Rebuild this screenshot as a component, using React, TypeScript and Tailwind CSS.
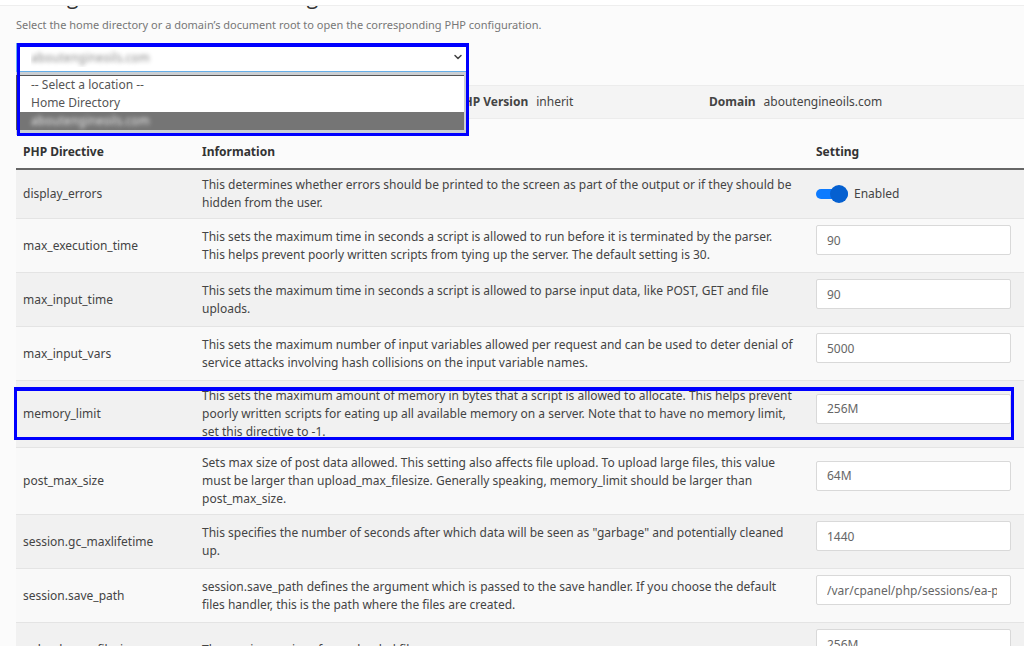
import { ChevronDown } from 'lucide-react';

type Directive = {
  name: string;
  info: string;
  value?: string;
  highlighted?: boolean;
};

const SELECTED_DOMAIN = 'aboutengineoils.com';

const DIRECTIVES: Directive[] = [
  {
    name: 'display_errors',
    info: 'This determines whether errors should be printed to the screen as part of the output or if they should be hidden from the user.',
  },
  {
    name: 'max_execution_time',
    info: 'This sets the maximum time in seconds a script is allowed to run before it is terminated by the parser. This helps prevent poorly written scripts from tying up the server. The default setting is 30.',
    value: '90',
  },
  {
    name: 'max_input_time',
    info: 'This sets the maximum time in seconds a script is allowed to parse input data, like POST, GET and file uploads.',
    value: '90',
  },
  {
    name: 'max_input_vars',
    info: 'This sets the maximum number of input variables allowed per request and can be used to deter denial of service attacks involving hash collisions on the input variable names.',
    value: '5000',
  },
  {
    name: 'memory_limit',
    info: 'This sets the maximum amount of memory in bytes that a script is allowed to allocate. This helps prevent poorly written scripts for eating up all available memory on a server. Note that to have no memory limit, set this directive to -1.',
    value: '256M',
    highlighted: true,
  },
  {
    name: 'post_max_size',
    info: 'Sets max size of post data allowed. This setting also affects file upload. To upload large files, this value must be larger than upload_max_filesize. Generally speaking, memory_limit should be larger than post_max_size.',
    value: '64M',
  },
  {
    name: 'session.gc_maxlifetime',
    info: 'This specifies the number of seconds after which data will be seen as "garbage" and potentially cleaned up.',
    value: '1440',
  },
  {
    name: 'session.save_path',
    info: 'session.save_path defines the argument which is passed to the save handler. If you choose the default files handler, this is the path where the files are created.',
    value: '/var/cpanel/php/sessions/ea-php74',
  },
  {
    name: 'upload_max_filesize',
    info: 'The maximum size of an uploaded file.',
    value: '256M',
  },
];

function LocationPicker() {
  return (
    <div className="relative z-10 w-[453px] max-w-full">
      <select
        aria-label="Location"
        defaultValue={SELECTED_DOMAIN}
        className="block h-[29px] w-full appearance-none border border-[#66afe9] bg-white px-[14px] text-[12px] text-transparent [text-shadow:0_0_4px_#888]"
      >
        <option value="">-- Select a location --</option>
        <option value="home">Home Directory</option>
        <option value={SELECTED_DOMAIN}>{SELECTED_DOMAIN}</option>
      </select>
      <ChevronDown
        aria-hidden="true"
        strokeWidth={3}
        className="pointer-events-none absolute top-[8px] right-[5px] size-3 text-[#444]"
      />
      <div className="absolute inset-x-0 top-full bg-[#cbcfd3] pt-[3px] pr-[5px] pb-[5px]">
        <ul
          role="listbox"
          aria-label="Location options"
          className="border-t border-l-2 border-[#555] bg-white text-[12px] leading-[18px] text-[#555]"
        >
          <li role="option" aria-selected="false" className="px-[13px]">
            -- Select a location --
          </li>
          <li role="option" aria-selected="false" className="px-[13px]">
            Home Directory
          </li>
          <li
            role="option"
            aria-selected="true"
            className="bg-[#757575] px-[13px] text-transparent [text-shadow:0_0_4px_#eee]"
          >
            {SELECTED_DOMAIN}
          </li>
        </ul>
      </div>
      <div className="pointer-events-none absolute top-0 right-0 -bottom-[64px] left-px border-[3px] border-t-4 border-[#0000ff]" />
    </div>
  );
}

function SummaryBar() {
  return (
    <dl className="mt-[13px] flex h-[34px] items-center border-y border-[#ececec] bg-[#f4f4f4]">
      <div className="flex w-[693px] gap-2 pl-[440px] whitespace-nowrap">
        <dt className="font-bold">PHP Version</dt>
        <dd>inherit</dd>
      </div>
      <div className="flex gap-2">
        <dt className="font-bold">Domain</dt>
        <dd>{SELECTED_DOMAIN}</dd>
      </div>
    </dl>
  );
}

function DirectiveSetting({ directive }: { directive: Directive }) {
  if (directive.value === undefined) {
    return (
      <div className="flex items-center gap-[6px]">
        <input
          id={directive.name}
          type="checkbox"
          role="switch"
          defaultChecked
          className="relative h-[10px] w-8 appearance-none rounded-full bg-[#0d7bff] before:absolute before:-top-1 before:right-0 before:size-[18px] before:rounded-full before:bg-[#0560d0]"
        />
        <label htmlFor={directive.name}>Enabled</label>
      </div>
    );
  }

  return (
    <input
      id={directive.name}
      type="text"
      defaultValue={directive.value}
      className="mb-[11px] block h-[30px] w-full rounded-xs border border-[#d9d9d9] bg-white pr-[13px] pl-[10px] text-[12px] text-[#666]"
    />
  );
}

function DirectiveRow({ directive }: { directive: Directive }) {
  return (
    <tr className="border-t border-[#e4e4e4] odd:bg-[#f1f1f1] even:bg-[#f9f9f9]">
      <td className="relative px-[7px] py-[6px]">
        {directive.value === undefined ? (
          directive.name
        ) : (
          <label htmlFor={directive.name}>{directive.name}</label>
        )}
        {directive.highlighted && (
          <div className="pointer-events-none absolute top-[6px] bottom-[7px] -left-[2px] z-10 w-[calc(100vw-24px)] border-[3px] border-t-4 border-[#0000ff]" />
        )}
      </td>
      <td className="py-[6px] pr-[13px] pl-[7px]">{directive.info}</td>
      <td className="py-[6px] pr-[13px] pl-[7px]">
        <DirectiveSetting directive={directive} />
      </td>
    </tr>
  );
}

function App() {
  return (
    <div className="flex h-screen flex-col overflow-hidden bg-[#fbfbfb] font-['Noto_Sans',sans-serif] text-[12px] leading-[18px] text-[#444]">
      <header className="h-[6px] shrink-0 border-b border-[#eee] bg-white" />
      <main className="min-h-0 flex-1 overflow-hidden pl-4">
        <h1 className="-mt-[23px] font-['Open_Sans',sans-serif] text-[21px] leading-[26px] text-[#333]">
          Configure PHP INI basic settings
        </h1>
        <p className="mt-[7px] mb-[9px] text-[11px] leading-[18px] text-[#777]">
          Select the home directory or a domain’s document root to open the corresponding PHP
          configuration.
        </p>
        <LocationPicker />
        <SummaryBar />
        <table className="mt-4 w-full table-fixed border-collapse text-left">
          <thead>
            <tr className="border-b-2 border-[#666] text-[#333]">
              <th className="w-[179px] px-[7px] pt-2 pb-[7px] font-bold">PHP Directive</th>
              <th className="px-[7px] pt-2 pb-[7px] font-bold">Information</th>
              <th className="w-[215px] px-[7px] pt-2 pb-[7px] font-bold">Setting</th>
            </tr>
          </thead>
          <tbody>
            {DIRECTIVES.map((directive) => (
              <DirectiveRow key={directive.name} directive={directive} />
            ))}
          </tbody>
        </table>
      </main>
    </div>
  );
}

export default App;
